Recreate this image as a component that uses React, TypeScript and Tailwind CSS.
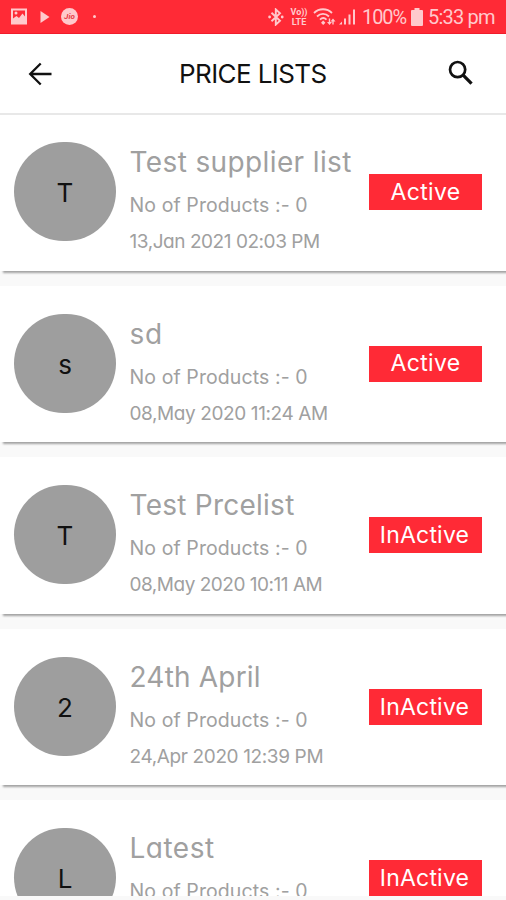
import React from 'react';

interface PriceList {
    initial: string;
    name: string;
    nameSpacing: string;
    date: string;
    dateSpacing: string;
    active: boolean;
}

const priceLists: PriceList[] = [
    { initial: 'T', name: 'Test supplier list', nameSpacing: 'tracking-[0.38px]', date: '13,Jan 2021 02:03 PM', dateSpacing: 'tracking-[-0.45px]', active: true },
    { initial: 's', name: 'sd', nameSpacing: 'tracking-[0.6px]', date: '08,May 2020 11:24 AM', dateSpacing: 'tracking-[-0.4px]', active: true },
    { initial: 'T', name: 'Test Prcelist', nameSpacing: 'tracking-[0.25px]', date: '08,May 2020 10:11 AM', dateSpacing: 'tracking-[-0.48px]', active: false },
    { initial: '2', name: '24th April', nameSpacing: 'tracking-[0.2px]', date: '24,Apr 2020 12:39 PM', dateSpacing: 'tracking-[-0.37px]', active: false },
    { initial: 'L', name: 'Latest', nameSpacing: 'tracking-[0.5px]', date: '24,Apr 2020 12:30 PM', dateSpacing: 'tracking-[-0.37px]', active: false },
];

const StatusBar = () => (
    <div className="flex h-[34px] shrink-0 items-center border-b border-[#f01c2b] bg-[#ff2a36] pl-[10px] pr-[11px] text-[#ffc9cc]">
        <svg width="18" height="17" viewBox="0 0 18 17" className="shrink-0">
            <path fillRule="evenodd" fill="currentColor" d="M1 .5h16v16H1zM3 2.500v8l3.500-2.500 2.500 2 3.500-4.500 2.500 3v-6z" />
            <circle cx="6" cy="5" r="1.500" fill="currentColor" />
        </svg>
        <svg width="10" height="12" viewBox="0 0 10 12" className="ml-[12px] shrink-0">
            <path d="M.5 0v12l9-6z" fill="currentColor" />
        </svg>
        <div className="ml-[11px] flex h-[17px] w-[17px] shrink-0 items-center justify-center rounded-full bg-[#ffc9cc] font-['Roboto'] text-[8px] font-bold italic text-[#e83b45]">
            Jio
        </div>
        <div className="ml-[15px] h-[3px] w-[3px] rounded-full bg-[#ffc9cc]" />

        <div className="ml-auto flex items-center">
            <svg width="18" height="18" viewBox="0 0 18 18" fill="none" stroke="currentColor" strokeWidth="1.900" className="-ml-[4px] mr-[1px]">
                <path d="M4.500 4.800l8.500 8-4.200 3.800V1.400L13 5.200l-8.500 8" />
                <circle cx="2.600" cy="9" r="1.400" fill="currentColor" stroke="none" />
                <circle cx="15.200" cy="9" r="1.400" fill="currentColor" stroke="none" />
            </svg>
            <div className="ml-[4px] flex w-[18px] flex-col items-center font-['Roboto'] text-[9px] font-bold leading-[10px]">
                <span>Vo))</span>
                <span>LTE</span>
            </div>
            <svg width="24" height="18" viewBox="0 0 24 18" fill="none" stroke="currentColor" strokeWidth="1.800" className="ml-[5px]">
                <path d="M1 5c5-5 13-5 18 0M4 8.500c3.500-3.400 8.500-3.400 12 0M7 11.700c2-2 4.500-2 6.500 0" />
                <path d="M10.200 12.500l2.200 2.200-2.200 2.200L8 14.700z" fill="currentColor" stroke="none" />
                <path d="M14 14l2.500 3 2.500-3zM17.500 13.500l2.500-3 2.500 3z" fill="currentColor" stroke="none" />
                <path d="M16.500 10.500v4M20 13v3.500" strokeWidth="1.400" />
            </svg>
            <svg width="18" height="16" viewBox="0 0 18 16" fill="currentColor" className="ml-[1px]">
                <path d="M1 15.500l3-3v3zM6 9.500h2v6H6zM10.500 5.500h2v10h-2zM15 .5h2v15h-2z" />
            </svg>
            <span className="ml-[6px] w-[44px] whitespace-nowrap font-['Roboto'] text-[20px] leading-[20px] tracking-[-1.1px]">100%</span>
            <svg width="12" height="18" viewBox="0 0 12 18" fill="currentColor" className="ml-[5px]">
                <path d="M3.500 0h5v2H11q1 0 1 1v14q0 1-1 1H1q-1 0-1-1V3q0-1 1-1h2.500z" />
            </svg>
            <span className="ml-[5px] w-[67px] whitespace-nowrap font-['Roboto'] text-[20px] leading-[20px] tracking-[-0.8px]">5:33 pm</span>
        </div>
    </div>
);

const Header = () => (
    <header className="relative -mb-px flex h-[81px] shrink-0 items-center border-b-2 border-[#e8e8e8] bg-white text-[#111]">
        <svg width="24" height="24" viewBox="0 0 24 24" fill="none" stroke="currentColor" strokeWidth="2.300" className="ml-[28px]">
            <path d="M23.500 12H2.500M12.700 1.500L2.200 12l10.500 10.500" />
        </svg>
        <h1 className="ml-[127px] w-[150px] whitespace-nowrap text-[26px] leading-[36px] tracking-[-0.6px]">PRICE LISTS</h1>
        <svg width="25" height="25" viewBox="0 0 26 26" fill="none" stroke="currentColor" strokeWidth="2.800" className="-mt-[2px] ml-[119px]">
            <circle cx="10" cy="10" r="7.900" />
            <path d="M15.500 15.500l9 9" strokeWidth="3.400" />
        </svg>
    </header>
);

const PriceListCard = ({ item }: { item: PriceList }) => (
    <li className="mb-[15px] flex h-[156.600px] shrink-0 bg-white pl-[14px] shadow-[3px_2px_2px_rgba(0,0,0,0.35)]">
        <div className="mt-[28px] flex h-[99px] w-[102px] shrink-0 items-center justify-center rounded-full bg-[#9e9e9e] pt-[2px] text-[26px] text-[#111]">
            {item.initial}
        </div>
        <div className="ml-[13.500px] w-[239.500px] shrink-0 whitespace-nowrap pt-[23px] text-[#a0a0a0]">
            <h2 className={`text-[28px] leading-[50px] ${item.nameSpacing}`}>{item.name}</h2>
            <p className="text-[19.500px] leading-[36px] tracking-[0.1px]">No of Products :- 0</p>
            <p className={`text-[19px] leading-[37px] ${item.dateSpacing}`}>{item.date}</p>
        </div>
        <div className="mt-[60px] flex h-[36px] w-[113px] items-center justify-center bg-[#ff2a36] text-[23px] text-white">
            {item.active ? (
                <span className="tracking-[0.3px]">Active</span>
            ) : (
                <span className="-ml-[2px] tracking-[0.2px]">InActive</span>
            )}
        </div>
    </li>
);

const App = () => {
    return (
        <div className="flex h-[900px] w-[506px] flex-col overflow-hidden bg-[#f9f9f9] font-['Inter',sans-serif] [font-feature-settings:'cv11']">
            <StatusBar />
            <Header />
            <ul className="flex h-[782px] shrink-0 flex-col overflow-hidden">
                {priceLists.map((item) => (
                    <PriceListCard key={item.name} item={item} />
                ))}
            </ul>
        </div>
    );
};

export default App;
